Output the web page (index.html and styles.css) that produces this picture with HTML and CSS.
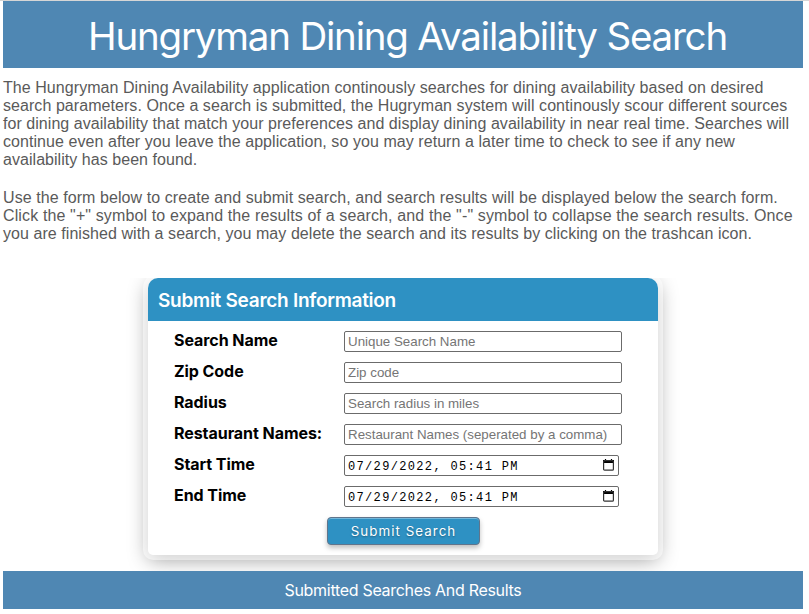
FILE: index.html
```html
<!DOCTYPE html>
<html lang="en">
<head>
<meta charset="utf-8">
<title>Hungryman Dining Availability Search</title>
<link rel="stylesheet" href="styles.css">
</head>
<body>
<header class="banner"><h1>Hungryman Dining Availability Search</h1></header>
<main>
<div class="intro">
<p>The Hungryman Dining Availability application continously searches for dining availability based on desired<br>search parameters. Once a search is submitted, the Hugryman system will continously scour different sources<br><span class="snug">for dining availability that match your preferences and display dining availability in near real time. Searches will</span><br>continue even after you leave the application, so you may return a later time to check to see if any new<br><span class="snug">availability has been found.</span></p>
<p><span class="loose">Use the form below to create and submit search, and search results will be displayed below the search form.</span><br><span class="wide">Click the "+" symbol to expand the results of a search, and the "-" symbol to collapse the search results. Once</span><br>you are finished with a search, you may delete the search and its results by clicking on the trashcan icon.</p>
</div>
<section class="form-area">
<form class="card">
<h2>Submit Search Information</h2>
<div class="fields">
<label for="name">Search Name</label><input id="name" placeholder="Unique Search Name">
<label for="zip">Zip Code</label><input id="zip" placeholder="Zip code">
<label for="radius">Radius</label><input id="radius" placeholder="Search radius in miles">
<label for="rest">Restaurant Names:</label><input id="rest" placeholder="Restaurant Names (seperated by a comma)">
<label>Start Time</label>
<div class="date"><span>07/29/2022, 05:41 PM</span><svg viewBox="0 0 11 12"><path d="M2.5 0v2M8.5 0v2" stroke="#000" stroke-width="1.2"/><path d="M0 1h11v3H0z"/><rect x=".6" y="1.6" width="9.8" height="9.6" rx="1" fill="none" stroke="#333" stroke-width="1.2"/></svg></div>
<label>End Time</label>
<div class="date"><span>07/29/2022, 05:41 PM</span><svg viewBox="0 0 11 12"><path d="M2.5 0v2M8.5 0v2" stroke="#000" stroke-width="1.2"/><path d="M0 1h11v3H0z"/><rect x=".6" y="1.6" width="9.8" height="9.6" rx="1" fill="none" stroke="#333" stroke-width="1.2"/></svg></div>
</div>
<button type="button">Submit Search</button>
</form>
</section>
</main>
<footer class="results">Submitted Searches And Results</footer>
</body>
</html>
```
FILE: styles.css
```css
* { box-sizing: border-box; }
body {
  margin: 0;
  height: 614px;
  overflow: hidden;
  border-top: 1px solid #d6d6d6;
  padding: 0 6px 0 3px;
  background: #fff;
  font-family: Inter, "Liberation Sans", sans-serif;
}
.banner {
  height: 67px;
  background: #4f87b3;
  color: #fff;
  text-align: center;
}
h1 {
  margin: 0;
  padding-left: 9px;
  font-size: 38.5px;
  font-weight: 400;
  line-height: 70px;
  letter-spacing: -1.2px;
  white-space: nowrap;
}
.intro {
  height: 210px;
  padding-top: 11px;
  color: #5a5a5a;
  font: 16px/18px "Liberation Sans", sans-serif;
  letter-spacing: 0.06px;
  white-space: nowrap;
}
.intro p { margin: 0 0 20px; }
.snug { letter-spacing: 0.045px; }
.loose { letter-spacing: 0.077px; }
.wide { letter-spacing: 0.128px; }
.form-area {
  height: 293px;
  overflow: hidden;
}
.card {
  width: 510px;
  height: 277px;
  margin: 0 0 0 145px;
  border-radius: 10px 10px 5px 5px;
  background: #fff;
  box-shadow: 0 0 0 5px rgba(255, 255, 255, .5), 0 5px 20px rgba(0, 0, 0, .38);
}
h2 {
  height: 43px;
  margin: 0;
  padding-left: 10px;
  border-radius: 10px 10px 0 0;
  background: #2e91c3;
  color: #fff;
  font-size: 19px;
  font-weight: 600;
  line-height: 45px;
  letter-spacing: -0.27px;
}
.fields {
  display: grid;
  grid-template-columns: 170px 278px;
  grid-auto-rows: 21px;
  row-gap: 10px;
  padding: 10px 0 0 26px;
}
label {
  color: #000;
  font-size: 16px;
  font-weight: 650;
  line-height: 19px;
  white-space: nowrap;
  letter-spacing: -0.06px;
}
input, .date {
  width: 278px;
  height: 21px;
  margin: 0;
  border: 1px solid #6b6b6b;
  border-radius: 2px;
  background: #fff;
}
input {
  padding: 1px 3px;
  font: 13.333px "Liberation Sans", sans-serif;
}
input::placeholder { color: #757575; }
.date {
  display: flex;
  width: 275px;
  align-items: center;
  justify-content: space-between;
  padding: 1px 4px 0 3px;
  color: #000;
  font: 12px/20px "Liberation Mono", monospace;
  letter-spacing: 1.34px;
  white-space: pre;
}
.date span { padding-top: 1px; }
.date svg { width: 11px; height: 12px; margin-top: -2px; }
button {
  display: block;
  width: 153px;
  height: 28px;
  margin: 10px 0 0 179px;
  padding: 0;
  border: 1px solid #60758c;
  border-radius: 4px;
  background: #2e91c3;
  box-shadow: inset 0 1px 0 #72b7db, 0 3px 5px rgba(0, 0, 0, .25);
  color: #fff;
  font: 13.333px/26px Inter, sans-serif;
  letter-spacing: 1.05px;
  text-shadow: 0 1px 2px rgba(0, 0, 0, .35);
}
.results {
  height: 38px;
  background: #4f87b3;
  color: #fff;
  font-size: 16px;
  line-height: 39px;
  letter-spacing: -0.3px;
  text-align: center;
}
```
